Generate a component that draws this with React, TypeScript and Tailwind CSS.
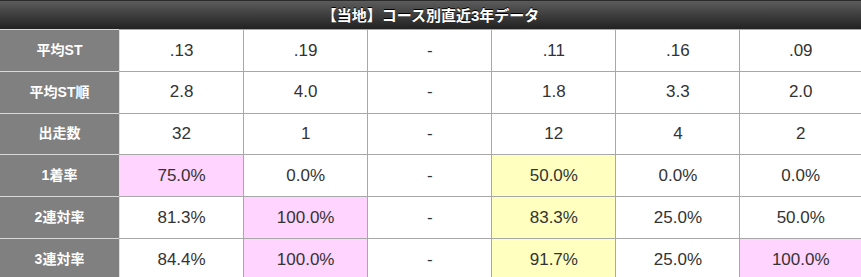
import React from "react";

type Cell = { v: string; c?: "p" | "y" };

const rows: { label: string; cells: Cell[] }[] = [
  { label: "平均ST", cells: [{ v: ".13" }, { v: ".19" }, { v: "-" }, { v: ".11" }, { v: ".16" }, { v: ".09" }] },
  { label: "平均ST順", cells: [{ v: "2.8" }, { v: "4.0" }, { v: "-" }, { v: "1.8" }, { v: "3.3" }, { v: "2.0" }] },
  { label: "出走数", cells: [{ v: "32" }, { v: "1" }, { v: "-" }, { v: "12" }, { v: "4" }, { v: "2" }] },
  { label: "1着率", cells: [{ v: "75.0%", c: "p" }, { v: "0.0%" }, { v: "-" }, { v: "50.0%", c: "y" }, { v: "0.0%" }, { v: "0.0%" }] },
  { label: "2連対率", cells: [{ v: "81.3%" }, { v: "100.0%", c: "p" }, { v: "-" }, { v: "83.3%", c: "y" }, { v: "25.0%" }, { v: "50.0%" }] },
  { label: "3連対率", cells: [{ v: "84.4%" }, { v: "100.0%", c: "p" }, { v: "-" }, { v: "91.7%", c: "y" }, { v: "25.0%" }, { v: "100.0%", c: "p" }] },
];

const font = { fontFamily: '"Liberation Sans", Arial, "Noto Sans CJK JP", sans-serif' };

export default function App() {
  return (
    <div className="w-[861px] h-[277px] overflow-hidden bg-white" style={font}>
      <div className="h-[29px] border-t border-[#2a2a2a] bg-gradient-to-b from-[#5c5c5c] to-[#222222] flex items-center justify-center text-white font-bold text-[15px] leading-none [text-shadow:0_-1px_0_#000]">
        【当地】コース別直近3年データ
      </div>
      {rows.map((r) => (
        <div
          key={r.label}
          className="grid grid-cols-[119px_repeat(5,124.1px)_1fr] h-[41.8px] border-t border-[#a8a8a8]"
        >
          <div className="bg-[#808080] border-t border-[#d8d8d8] -mt-px flex items-center justify-center text-white font-bold text-[14px]">
            {r.label}
          </div>
          {r.cells.map((c, i) => (
            <div
              key={i}
              className={`flex items-center justify-center text-[17px] text-[#333333] ${
                i === 0 ? "border-l border-[#e0e0e0]" : "border-l border-[#a8a8a8]"
              } ${c.c === "p" ? "bg-[#ffd4ff]" : c.c === "y" ? "bg-[#ffffc0]" : "bg-white"}`}
            >
              {c.v}
            </div>
          ))}
        </div>
      ))}
    </div>
  );
}
